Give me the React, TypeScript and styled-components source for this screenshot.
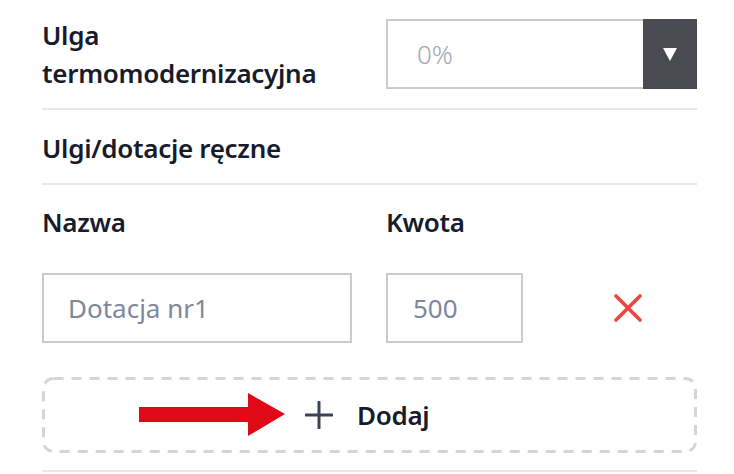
import React from 'react';
import styled, { createGlobalStyle } from 'styled-components';

const COLORS = {
  text: '#171b2c',
  muted: '#7e889b',
  faint: '#a3a8b3',
  border: '#cbcbcb',
  divider: '#e6e6eb',
  dash: '#d4d5db',
  dark: '#4a4a52',
  red: '#ef4440',
  arrow: '#e00a17',
  plus: '#3a4356',
};

const dashedFrame = encodeURIComponent(
  `<svg xmlns="http://www.w3.org/2000/svg" width="100%" height="100%"><rect x="1.5" y="1.5" width="calc(100% - 3px)" height="calc(100% - 3px)" rx="10" ry="10" fill="none" stroke="${COLORS.dash}" stroke-width="3" stroke-dasharray="10 8"/></svg>`
);

const GlobalStyle = createGlobalStyle`
  html, body {
    margin: 0;
    padding: 0;
    background: #ffffff;
  }
  body {
    font-family: "Noto Sans", "Open Sans", sans-serif;
    color: ${COLORS.text};
  }
`;

const Page = styled.div`
  width: 655px;
  padding: 16px 0 0 42px;
`;

const Row = styled.div`
  display: grid;
  grid-template-columns: 344px 1fr;
  align-items: center;
  padding-bottom: 16px;
`;

const Label = styled.div`
  font-size: 26px;
  font-weight: 600;
  line-height: 38px;
  letter-spacing: -0.3px;
`;

const Divider = styled.div`
  height: 2px;
  background: ${COLORS.divider};
`;

const SectionTitle = styled.div`
  height: 73px;
  display: flex;
  align-items: center;
  padding-top: 2px;
  box-sizing: border-box;
  font-size: 26px;
  font-weight: 600;
  letter-spacing: -0.3px;
`;

const Select = styled.div`
  display: flex;
  height: 70px;
  box-sizing: border-box;
  border: 2px solid ${COLORS.border};
  border-right: none;
`;

const SelectValue = styled.div`
  flex: 1;
  display: flex;
  align-items: center;
  padding-left: 29px;
  font-size: 26px;
  font-weight: 300;
  color: ${COLORS.faint};
`;

const SelectButton = styled.div`
  width: 54px;
  margin: -2px 0;
  background: ${COLORS.dark};
  display: flex;
  align-items: center;
  justify-content: center;
`;

const FieldGrid = styled.div`
  display: grid;
  grid-template-columns: 310px 137px 1fr;
  column-gap: 34px;
`;

const ColumnHead = styled.div`
  height: 74px;
  display: flex;
  align-items: center;
  font-size: 26px;
  font-weight: 600;
  letter-spacing: -0.3px;
`;

const Input = styled.div<{ $indent: number }>`
  height: 70px;
  box-sizing: border-box;
  border: 2px solid ${COLORS.border};
  display: flex;
  align-items: center;
  padding-left: ${(p) => p.$indent}px;
  font-size: 26px;
  color: ${COLORS.muted};
  margin-top: 14px;
`;

const RemoveCell = styled.div`
  margin-top: 14px;
  height: 70px;
  display: flex;
  align-items: center;
  padding-left: 56px;
`;

const AddBox = styled.div`
  margin-top: 34px;
  height: 76px;
  box-sizing: border-box;
  background-image: url("data:image/svg+xml,${dashedFrame}");
  background-repeat: no-repeat;
  display: flex;
  align-items: center;
  padding-left: 97px;
`;

const AddLabel = styled.div`
  display: flex;
  align-items: center;
  gap: 24px;
  margin-left: 20px;
  font-size: 26px;
  font-weight: 600;
  letter-spacing: -0.3px;
`;

const BottomDivider = styled(Divider)`
  margin-top: 17px;
`;

const Triangle = () => (
  <svg width="14" height="14" viewBox="0 0 14 14">
    <polygon points="0,1 14,1 7,14" fill="#fff" />
  </svg>
);

const Cross = () => (
  <svg width="30" height="30" viewBox="0 0 30 30">
    <path d="M3 3 L27 27 M27 3 L3 27" stroke={COLORS.red} strokeWidth="3.6" strokeLinecap="round" />
  </svg>
);

const Arrow = () => (
  <svg width="146" height="44" viewBox="0 0 146 44">
    <polygon points="0,14 109,14 109,0 146,21 109,43 109,29 0,29" fill={COLORS.arrow} />
  </svg>
);

const Plus = () => (
  <svg width="28" height="28" viewBox="0 0 28 28">
    <path d="M14 1 V27 M1 14 H27" stroke={COLORS.plus} strokeWidth="3" strokeLinecap="round" />
  </svg>
);

export default function App() {
  return (
    <>
      <GlobalStyle />
      <Page>
        <Row>
          <Label>
            Ulga
            <br />
            termomodernizacyjna
          </Label>
          <Select>
            <SelectValue>0%</SelectValue>
            <SelectButton>
              <Triangle />
            </SelectButton>
          </Select>
        </Row>
        <Divider />
        <SectionTitle>Ulgi/dotacje ręczne</SectionTitle>
        <Divider />
        <FieldGrid>
          <ColumnHead>Nazwa</ColumnHead>
          <ColumnHead>Kwota</ColumnHead>
          <div />
          <Input $indent={24}>Dotacja nr1</Input>
          <Input $indent={25}>500</Input>
          <RemoveCell>
            <Cross />
          </RemoveCell>
        </FieldGrid>
        <AddBox>
          <Arrow />
          <AddLabel>
            <Plus />
            Dodaj
          </AddLabel>
        </AddBox>
        <BottomDivider />
      </Page>
    </>
  );
}
